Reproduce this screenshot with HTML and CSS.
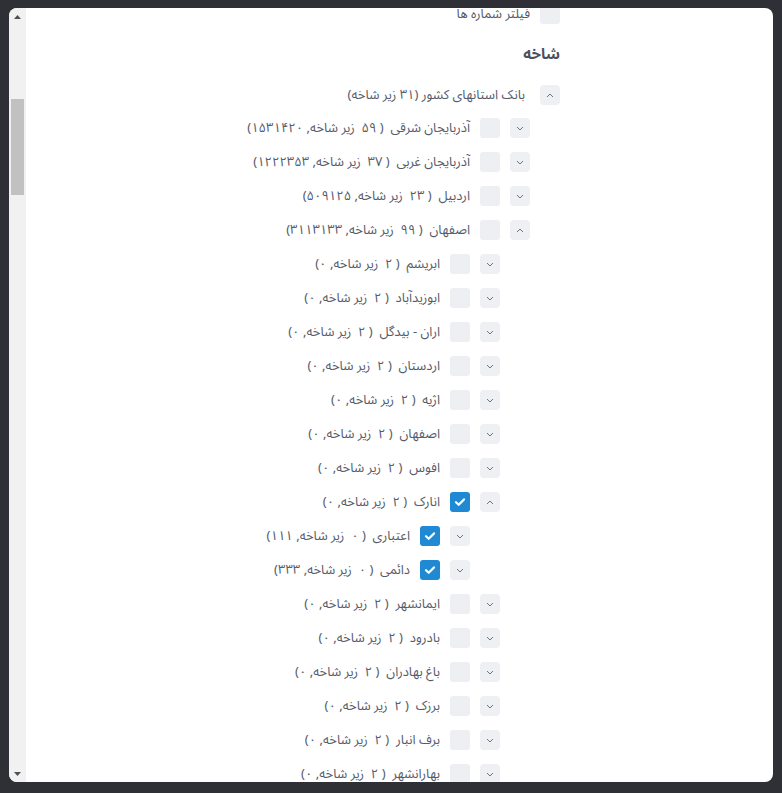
FILE: index.html
```html
<!DOCTYPE html>
<html lang="fa">
<head>
<meta charset="utf-8">
<title>شاخه</title>
<link rel="stylesheet" href="styles.css">
</head>
<body>
<div class="modal">
  <div class="scrollbar" aria-hidden="true">
    <div class="sb-btn"><svg width="7" height="4" viewBox="0 0 7 4"><path d="M0 4L3.5 0L7 4Z" fill="#505050"/></svg></div>
    <div class="sb-track"><div class="sb-thumb"></div></div>
    <div class="sb-btn"><svg width="7" height="4" viewBox="0 0 7 4"><path d="M0 0L3.5 4L7 0Z" fill="#505050"/></svg></div>
  </div>
  <div class="modal-body">
    <div class="content">
      <div class="opt-row"><span class="cb"></span><span class="label">فیلتر شماره ها</span></div>
      <h3 class="section-title">شاخه</h3>
      <ul class="tree">
        <li>
          <div class="row root-row"><span class="chev"><svg width="8" height="5" viewBox="0 0 8 5"><path d="M1 4L4 1L7 4" fill="none" stroke="#6f7488" stroke-width="1"/></svg></span><span class="label">بانک استانهای کشور (۳۱ زیر شاخه)</span></div>
          <ul class="children">
            <li><div class="row"><span class="chev"><svg width="8" height="5" viewBox="0 0 8 5"><path d="M1 1L4 4L7 1" fill="none" stroke="#6f7488" stroke-width="1"/></svg></span><span class="cb"></span><span class="label">آذربایجان شرقی  ( ۵۹  زیر شاخه, ۱۵۳۱۴۲۰)</span></div></li>
            <li><div class="row"><span class="chev"><svg width="8" height="5" viewBox="0 0 8 5"><path d="M1 1L4 4L7 1" fill="none" stroke="#6f7488" stroke-width="1"/></svg></span><span class="cb"></span><span class="label">آذربایجان غربی  ( ۳۷  زیر شاخه, ۱۲۲۲۳۵۳)</span></div></li>
            <li><div class="row"><span class="chev"><svg width="8" height="5" viewBox="0 0 8 5"><path d="M1 1L4 4L7 1" fill="none" stroke="#6f7488" stroke-width="1"/></svg></span><span class="cb"></span><span class="label">اردبیل  ( ۲۳  زیر شاخه, ۵۰۹۱۲۵)</span></div></li>
            <li><div class="row"><span class="chev"><svg width="8" height="5" viewBox="0 0 8 5"><path d="M1 4L4 1L7 4" fill="none" stroke="#6f7488" stroke-width="1"/></svg></span><span class="cb"></span><span class="label">اصفهان  ( ۹۹  زیر شاخه, ۳۱۱۳۱۳۳)</span></div>
              <ul class="children">
                <li><div class="row"><span class="chev"><svg width="8" height="5" viewBox="0 0 8 5"><path d="M1 1L4 4L7 1" fill="none" stroke="#6f7488" stroke-width="1"/></svg></span><span class="cb"></span><span class="label">ابریشم  ( ۲  زیر شاخه, ۰)</span></div></li>
                <li><div class="row"><span class="chev"><svg width="8" height="5" viewBox="0 0 8 5"><path d="M1 1L4 4L7 1" fill="none" stroke="#6f7488" stroke-width="1"/></svg></span><span class="cb"></span><span class="label">ابوزیدآباد  ( ۲  زیر شاخه, ۰)</span></div></li>
                <li><div class="row"><span class="chev"><svg width="8" height="5" viewBox="0 0 8 5"><path d="M1 1L4 4L7 1" fill="none" stroke="#6f7488" stroke-width="1"/></svg></span><span class="cb"></span><span class="label">اران - بیدگل  ( ۲  زیر شاخه, ۰)</span></div></li>
                <li><div class="row"><span class="chev"><svg width="8" height="5" viewBox="0 0 8 5"><path d="M1 1L4 4L7 1" fill="none" stroke="#6f7488" stroke-width="1"/></svg></span><span class="cb"></span><span class="label">اردستان  ( ۲  زیر شاخه, ۰)</span></div></li>
                <li><div class="row"><span class="chev"><svg width="8" height="5" viewBox="0 0 8 5"><path d="M1 1L4 4L7 1" fill="none" stroke="#6f7488" stroke-width="1"/></svg></span><span class="cb"></span><span class="label">اژیه  ( ۲  زیر شاخه, ۰)</span></div></li>
                <li><div class="row"><span class="chev"><svg width="8" height="5" viewBox="0 0 8 5"><path d="M1 1L4 4L7 1" fill="none" stroke="#6f7488" stroke-width="1"/></svg></span><span class="cb"></span><span class="label">اصفهان  ( ۲  زیر شاخه, ۰)</span></div></li>
                <li><div class="row"><span class="chev"><svg width="8" height="5" viewBox="0 0 8 5"><path d="M1 1L4 4L7 1" fill="none" stroke="#6f7488" stroke-width="1"/></svg></span><span class="cb"></span><span class="label">افوس  ( ۲  زیر شاخه, ۰)</span></div></li>
                <li><div class="row"><span class="chev"><svg width="8" height="5" viewBox="0 0 8 5"><path d="M1 4L4 1L7 4" fill="none" stroke="#6f7488" stroke-width="1"/></svg></span><span class="cb checked"><svg width="20" height="20" viewBox="0 0 20 20"><path d="M6 10.2L8.7 12.8L14 7.4" fill="none" stroke="#fff" stroke-width="2.2" stroke-linecap="round" stroke-linejoin="round"/></svg></span><span class="label">انارک  ( ۲  زیر شاخه, ۰)</span></div>
                  <ul class="children">
                    <li><div class="row"><span class="chev"><svg width="8" height="5" viewBox="0 0 8 5"><path d="M1 1L4 4L7 1" fill="none" stroke="#6f7488" stroke-width="1"/></svg></span><span class="cb checked"><svg width="20" height="20" viewBox="0 0 20 20"><path d="M6 10.2L8.7 12.8L14 7.4" fill="none" stroke="#fff" stroke-width="2.2" stroke-linecap="round" stroke-linejoin="round"/></svg></span><span class="label">اعتباری  ( ۰  زیر شاخه, ۱۱۱)</span></div></li>
                    <li><div class="row"><span class="chev"><svg width="8" height="5" viewBox="0 0 8 5"><path d="M1 1L4 4L7 1" fill="none" stroke="#6f7488" stroke-width="1"/></svg></span><span class="cb checked"><svg width="20" height="20" viewBox="0 0 20 20"><path d="M6 10.2L8.7 12.8L14 7.4" fill="none" stroke="#fff" stroke-width="2.2" stroke-linecap="round" stroke-linejoin="round"/></svg></span><span class="label">دائمی  ( ۰  زیر شاخه, ۳۳۳)</span></div></li>
                  </ul>
                </li>
                <li><div class="row"><span class="chev"><svg width="8" height="5" viewBox="0 0 8 5"><path d="M1 1L4 4L7 1" fill="none" stroke="#6f7488" stroke-width="1"/></svg></span><span class="cb"></span><span class="label">ایمانشهر  ( ۲  زیر شاخه, ۰)</span></div></li>
                <li><div class="row"><span class="chev"><svg width="8" height="5" viewBox="0 0 8 5"><path d="M1 1L4 4L7 1" fill="none" stroke="#6f7488" stroke-width="1"/></svg></span><span class="cb"></span><span class="label">بادرود  ( ۲  زیر شاخه, ۰)</span></div></li>
                <li><div class="row"><span class="chev"><svg width="8" height="5" viewBox="0 0 8 5"><path d="M1 1L4 4L7 1" fill="none" stroke="#6f7488" stroke-width="1"/></svg></span><span class="cb"></span><span class="label">باغ بهادران  ( ۲  زیر شاخه, ۰)</span></div></li>
                <li><div class="row"><span class="chev"><svg width="8" height="5" viewBox="0 0 8 5"><path d="M1 1L4 4L7 1" fill="none" stroke="#6f7488" stroke-width="1"/></svg></span><span class="cb"></span><span class="label">برزک  ( ۲  زیر شاخه, ۰)</span></div></li>
                <li><div class="row"><span class="chev"><svg width="8" height="5" viewBox="0 0 8 5"><path d="M1 1L4 4L7 1" fill="none" stroke="#6f7488" stroke-width="1"/></svg></span><span class="cb"></span><span class="label">برف انبار  ( ۲  زیر شاخه, ۰)</span></div></li>
                <li><div class="row"><span class="chev"><svg width="8" height="5" viewBox="0 0 8 5"><path d="M1 1L4 4L7 1" fill="none" stroke="#6f7488" stroke-width="1"/></svg></span><span class="cb"></span><span class="label">بهارانشهر  ( ۲  زیر شاخه, ۰)</span></div></li>
              </ul>
            </li>
          </ul>
        </li>
      </ul>
    </div>
  </div>
</div>
</body>
</html>
```

FILE: styles.css
```css
* { box-sizing: border-box; }
html, body { margin: 0; height: 100%; }
body {
  background: #2f3035;
  padding: 8px 9px;
  overflow: hidden;
  font-family: "Noto Sans Arabic", "DejaVu Sans", sans-serif;
}
.modal {
  height: 774px;
  background: #fff;
  border-radius: 8px;
  overflow: hidden;
  display: flex;
}
.scrollbar {
  flex: none;
  width: 17px;
  background: #f1f1f1;
  display: flex;
  flex-direction: column;
}
.sb-btn {
  flex: none;
  height: 17px;
  display: flex;
  align-items: center;
  justify-content: center;
}
.sb-btn svg { display: block; }
.sb-track { flex: 1; }
.sb-thumb {
  margin: 74px 2px 0;
  height: 96px;
  background: #c1c1c1;
}
.modal-body {
  flex: 1;
  overflow: hidden;
  direction: rtl;
}
.content {
  margin-top: -11px;
  padding-right: 213px;
}
.section-title {
  margin: 12px 0 14px;
  font-size: 15px;
  line-height: 22px;
  font-weight: bold;
  color: #4b505c;
}
.opt-row, .row {
  display: flex;
  align-items: center;
  height: 34px;
  gap: 10px;
}
.root-row { height: 32px; gap: 15px; }
.tree, .children { list-style: none; margin: 0; padding: 0; }
.children { padding-right: 30px; }
.chev {
  flex: none;
  width: 20px;
  height: 20px;
  border-radius: 4px;
  background: #eff0f3;
  display: flex;
  align-items: center;
  justify-content: center;
}
.chev svg { display: block; }
.cb {
  flex: none;
  width: 20px;
  height: 20px;
  border-radius: 3px;
  background: #eeeff2;
  display: flex;
  align-items: center;
  justify-content: center;
}
.cb svg { display: block; }
.cb.checked { background: #1f8ad3; }
.label {
  white-space: pre;
  font-size: 13px;
  line-height: 20px;
  color: #565b69;
}
```
